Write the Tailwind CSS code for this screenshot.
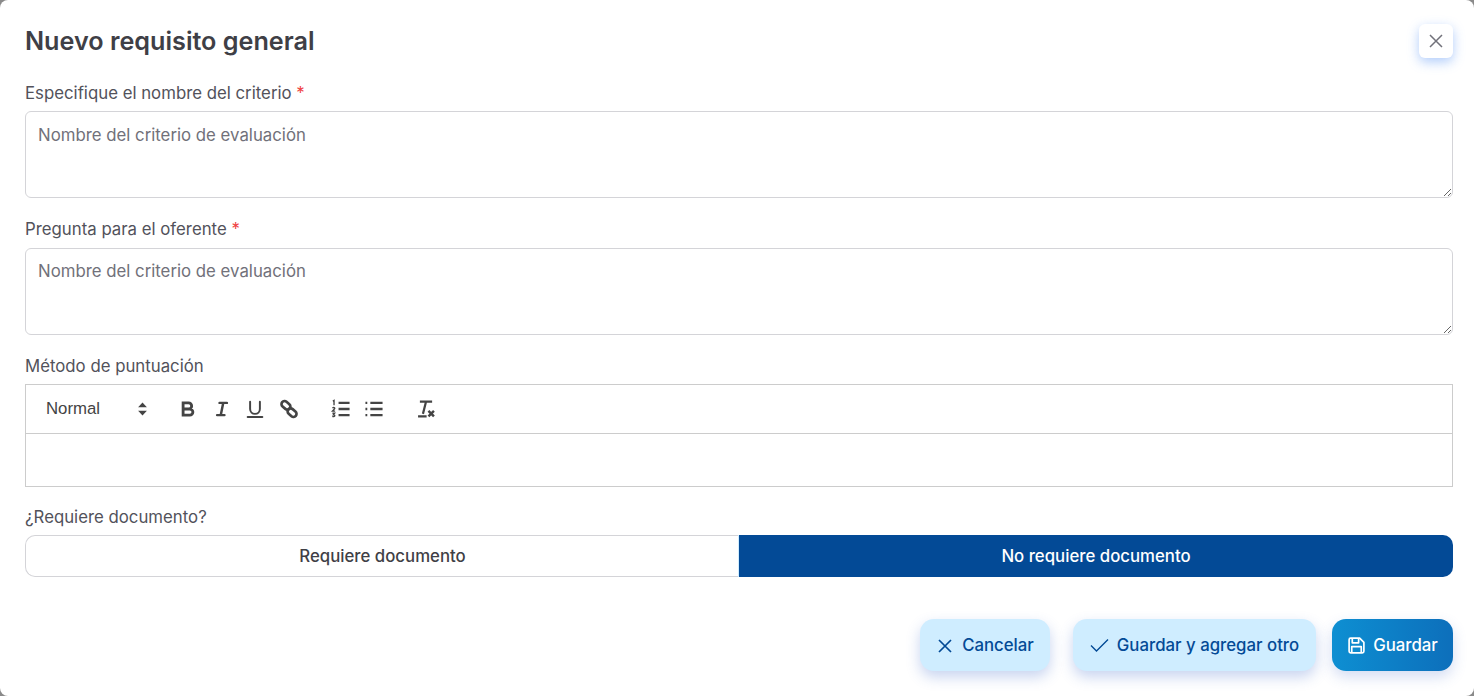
<!DOCTYPE html>
<html lang="es">
<head>
  <meta charset="UTF-8" />
  <title>Nuevo requisito general</title>
  <script src="https://cdn.jsdelivr.net/npm/@tailwindcss/browser@4"></script>
</head>
<body class="bg-[#8a8a8a] font-['Inter',sans-serif] overflow-hidden">

  <!-- Modal -->
  <div class="w-[1474px] h-[696px] bg-white rounded-[8px] pl-[25px] pr-[21px]">

    <!-- Cabecera -->
    <div class="flex justify-between items-start h-[82px] pt-[24px]">
      <h2 class="text-[25.2px] leading-[35px] font-semibold text-[#3f3f46]">Nuevo requisito general</h2>
      <button class="w-[34px] h-[34px] flex items-center justify-center bg-white rounded-[6px] shadow-[0_4px_12px_rgba(59,130,246,0.4)]">
        <svg class="w-[16px] h-[16px]" viewBox="0 0 16 16" fill="none" stroke="#71717a" stroke-width="1.5"><path d="M2 2l12 12M14 2L2 14" /></svg>
      </button>
    </div>

    <!-- Nombre -->
    <label class="block h-[29px] text-[16.8px] leading-[22px] text-[#52525b]">Especifique el nombre del criterio <span class="text-[#ef4444]">*</span></label>
    <textarea class="block w-full h-[87px] border border-[#d4d4d8] rounded-[6px] pl-[12px] pr-[13px] py-[11px] text-[16.8px] leading-[24px] outline-none placeholder:text-[#71717a]" placeholder="Nombre del criterio de evaluación"></textarea>

    <!-- Pregunta -->
    <label class="block mt-[20px] h-[30px] text-[16.8px] leading-[22px] text-[#52525b]">Pregunta para el oferente <span class="text-[#ef4444]">*</span></label>
    <textarea class="block w-full h-[87px] border border-[#d4d4d8] rounded-[6px] pl-[12px] pr-[13px] py-[10px] text-[16.8px] leading-[24px] outline-none placeholder:text-[#71717a]" placeholder="Nombre del criterio de evaluación"></textarea>

    <!-- Editor -->
    <label class="block mt-[20px] h-[29px] text-[16.8px] leading-[22px] text-[#52525b]">Método de puntuación</label>
    <div class="border border-[#cccccc] h-[103px]">
      <div class="h-[49px] border-b border-[#cccccc] flex items-center text-[#444444]">
        <span class="font-['Liberation_Sans',sans-serif] text-[16.8px] ml-[20px] w-[91px]">Normal</span>
        <svg class="w-[11px] h-[16px]" viewBox="0 0 10 14" fill="#444444"><path d="M5 1l4 4.500H1zM5 13L1 8.500h8z" /></svg>
        <div class="flex items-center ml-[29px] gap-[11.5px]">
          <svg class="w-[22px] h-[22px]" viewBox="0 0 18 18" fill="none" stroke="#444444" stroke-width="2.300"><path d="M5 4h4.500a2.500 2.500 0 010 5H5zM5 9h5.500a2.500 2.500 0 010 5H5z" /></svg>
          <svg class="w-[22px] h-[22px]" viewBox="0 0 18 18" fill="none" stroke="#444444" stroke-width="2" stroke-linecap="round"><path d="M7 4h6M5 14h6M8 14l2-10" /></svg>
          <svg class="w-[22px] h-[22px]" viewBox="0 0 18 18" fill="none" stroke="#444444" stroke-width="1.600" stroke-linecap="round"><path d="M5 3v6a4 4 0 008 0V3" /><path d="M3 15.500h12" /></svg>
          <svg class="w-[22px] h-[22px]" viewBox="0 0 18 18" fill="none" stroke="#444444" stroke-width="2.200"><rect x="2.500" y="3.500" width="8" height="5" rx="2.500" transform="rotate(40 6.500 6)" /><rect x="7.500" y="9.500" width="8" height="5" rx="2.500" transform="rotate(40 11.500 12)" /></svg>
        </div>
        <div class="flex items-center ml-[30.5px] gap-[11px]">
          <svg class="w-[22px] h-[22px]" viewBox="0 0 18 18" fill="none" stroke="#444444" stroke-width="2"><path d="M7 4h9M7 9h9M7 14h9" /><path stroke-width="1.100" d="M2.300 2.500l1-.5v4M2 8.300c1-1 2.200-.5 1.800.5L2 10.800h2.200M2 12.500h1.800l-1 1.300c1 0 1.300.5 1 1s-1.300.7-1.800.2" /></svg>
          <svg class="w-[22px] h-[22px]" viewBox="0 0 18 18" fill="none" stroke="#444444" stroke-width="2"><path d="M6 4h10M6 9h10M6 14h10M2 4h1.500M2 9h1.500M2 14h1.500" /></svg>
        </div>
        <svg class="w-[22px] h-[22px] ml-[30px]" viewBox="0 0 18 18" fill="none" stroke="#444444" stroke-width="1.800"><path d="M4 3h10M9 3l-2.500 10M2.500 15h7" /><path stroke-width="2" d="M11 10.500l4.500 4.500M15.500 10.500L11 15" /></svg>
      </div>
    </div>

    <!-- Documento -->
    <label class="block mt-[19px] h-[29px] text-[16.8px] leading-[22px] text-[#52525b]">¿Requiere documento?</label>
    <div class="grid grid-cols-2 h-[42px] text-[16.8px] font-medium">
      <div class="flex items-center justify-center pt-[1px] border border-[#d4d4d8] border-r-0 rounded-l-[10px] text-[#3f3f46]">Requiere documento</div>
      <div class="flex items-center justify-center pt-[1px] -ml-px bg-[#034a96] border-l border-[#cfedff] rounded-r-[10px] text-white">No requiere documento</div>
    </div>

    <!-- Acciones -->
    <div class="flex justify-end mt-[42px] text-[16.8px] font-medium">
      <button class="h-[52px] w-[130px] pt-[1px] flex items-center justify-center gap-[8px] bg-[#cfedff] text-[#034a96] rounded-[14px] shadow-[0_6px_14px_rgba(59,100,200,0.28)]">
        <svg class="w-[18px] h-[18px]" viewBox="0 0 18 18" fill="none" stroke="#034a96" stroke-width="1.700"><path d="M3 3l12 12M15 3L3 15" /></svg>
        Cancelar
      </button>
      <button class="h-[52px] w-[243px] ml-[23px] pt-[1px] flex items-center justify-center gap-[8px] bg-[#cfedff] text-[#034a96] rounded-[14px] shadow-[0_6px_14px_rgba(59,100,200,0.28)]">
        <svg class="w-[19px] h-[19px]" viewBox="0 0 19 19" fill="none" stroke="#034a96" stroke-width="1.400"><path d="M1 9.500l5.500 5.500L18 3.500" /></svg>
        Guardar y agregar otro
      </button>
      <button class="h-[52px] w-[121px] ml-[16px] pt-[1px] flex items-center justify-center gap-[7px] bg-gradient-to-r from-[#0e8fd2] to-[#0d6fbb] text-white rounded-[14px] shadow-[0_6px_14px_rgba(59,100,200,0.22)]">
        <svg class="w-[19px] h-[19px]" viewBox="0 0 18 18" fill="none" stroke="white" stroke-width="1.600" stroke-linejoin="round"><path d="M2 3.500A1.500 1.500 0 013.500 2H12l4 4v8.500a1.500 1.500 0 01-1.500 1.500h-11A1.500 1.500 0 012 14.500z" /><path d="M5 2v4.500h6V2M4.500 16v-6h9v6" /></svg>
        Guardar
      </button>
    </div>

  </div>

</body>
</html>
